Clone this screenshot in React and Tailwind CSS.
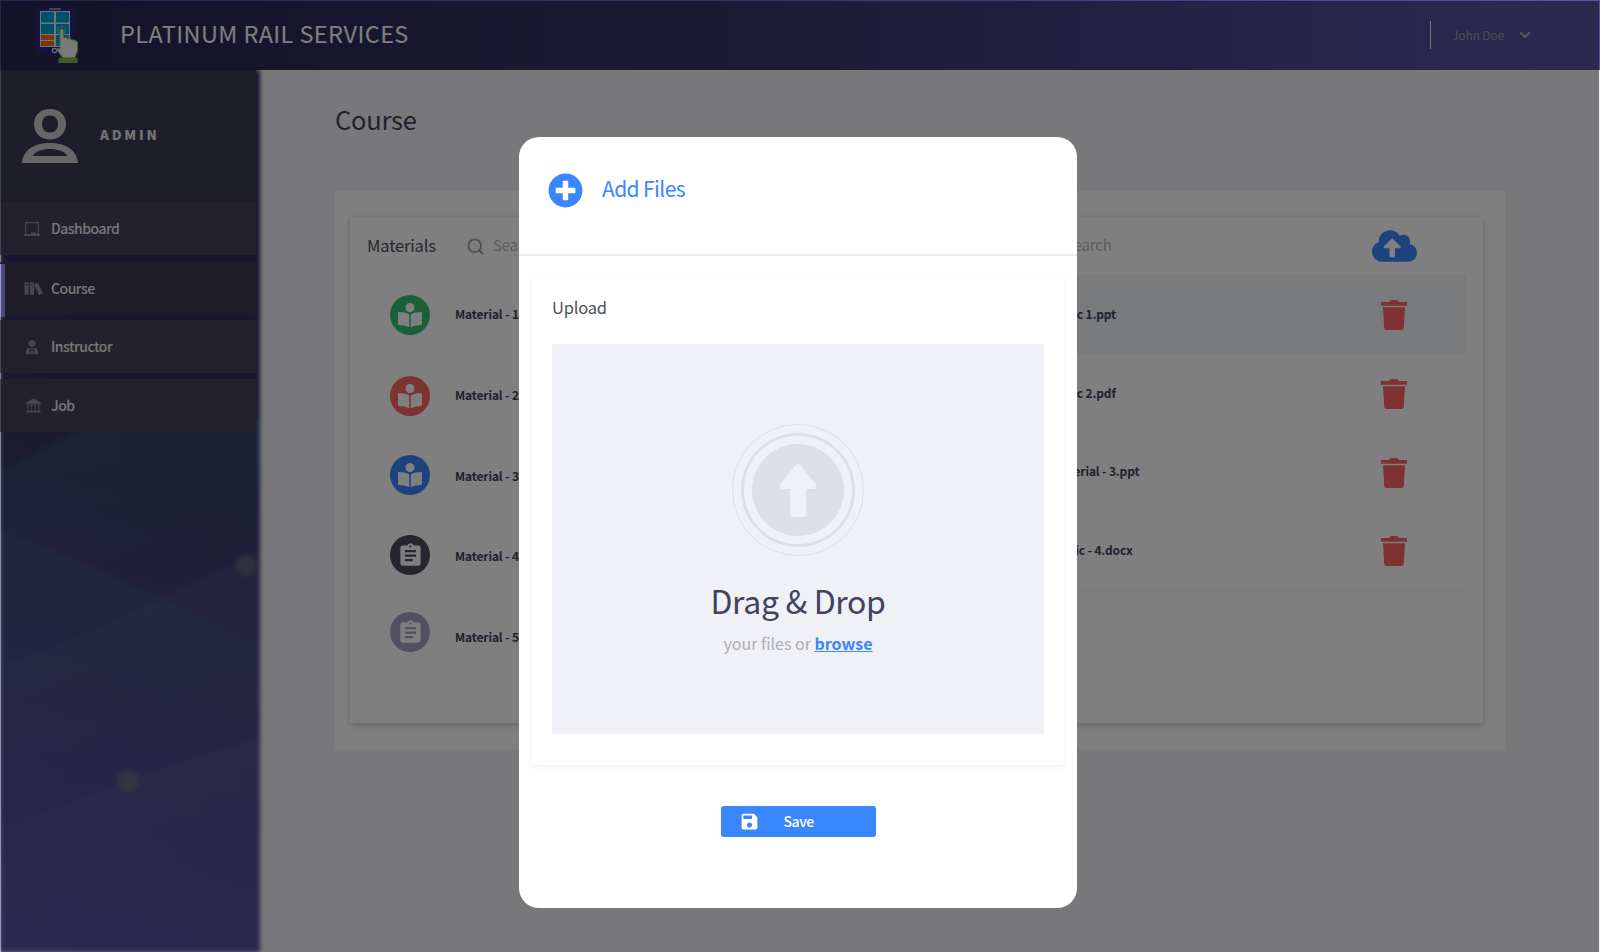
import React from "react";
import { FaBookReader, FaCloudUploadAlt, FaPlusCircle, FaUserTie } from "react-icons/fa";
import { ImBooks, ImLibrary } from "react-icons/im";
import { MdAssignment, MdSave } from "react-icons/md";
import { FiSearch } from "react-icons/fi";

function Logo() {
  return (
    <svg className="mb-[7px] h-[64px] w-[48px] shrink-0" viewBox="32 0 48 64">
      <rect x="36" y="7" width="38" height="47" rx="3" fill="#262480" />
      <rect x="49" y="8" width="12" height="2" rx="1" fill="#8a88b8" />
      <rect x="40" y="11" width="30" height="36" fill="#e8e8f0" />
      <rect x="41" y="12" width="13" height="10.500" fill="#00a4d6" />
      <rect x="56" y="12" width="13" height="10.500" fill="#00a4d6" />
      <rect x="41" y="24" width="13" height="10" fill="#00a4d6" />
      <rect x="56" y="24" width="13" height="10" fill="#00a4d6" />
      <rect x="41" y="35" width="13" height="5" fill="#f26a21" />
      <rect x="41" y="41" width="13" height="5" fill="#f26a21" />
      <rect x="56" y="35" width="13" height="11" fill="#00a4d6" />
      <circle cx="54.500" cy="50.500" r="2.200" fill="none" stroke="#e8e8f0" strokeWidth="1.200" />
      <circle cx="61.500" cy="30.500" r="4" fill="none" stroke="#5cc0c0" strokeWidth="1.200" />
      <path
        d="M60 30q1.500-2.500 3.500 0v8l3-.5 1 1.500 3-.5 1 1.500 3 0 3 2v9l-3 7H63l-6-8q-1-2.500 3-1z"
        fill="#f4f4f4"
        stroke="#8cc63f"
        strokeWidth="1"
      />
      <path d="M60 57.500h17.500V63h-19v-4z" fill="#7cb83a" />
    </svg>
  );
}

function AvatarIcon() {
  return (
    <svg className="h-[54px] w-[56px] shrink-0" viewBox="0 0 56 54" fill="#cdcdcd" fillRule="evenodd">
      <path d="M28 0c9.500 0 16 6 16 15s-6.500 15.500-16 15.500S12 24 12 15 18.500 0 28 0zm0 6.500c-5 0-8 3.200-8 8.500s3 8.500 8 8.500 8-3.200 8-8.500-3-8.500-8-8.500z" />
      <path d="M0 54C1 41 12 34 28 34s27 7 28 20zM10.500 47h35C42 42 36 40 28 40s-14 2-17.500 7z" />
    </svg>
  );
}

function BoardIcon() {
  return (
    <svg className="h-[14px] w-4" viewBox="0 0 16 14" fill="currentColor">
      <path d="M1 0h14v12h1v2H0v-2h1zM2.300 1.300V12H7v-1.500h5V12h1.700V1.300z" fillRule="evenodd" />
    </svg>
  );
}

function ChevronIcon() {
  return (
    <svg className="ml-[15px] h-2 w-3" viewBox="0 0 12 8" fill="none" stroke="#b0b0b0" strokeWidth="2">
      <path d="M1.200 1.200 6 6l4.800-4.800" />
    </svg>
  );
}

function TrashIcon({ className }) {
  return (
    <svg className={`h-[30px] w-[26px] text-[#ff6565] ${className}`} viewBox="0 0 26 30" fill="currentColor">
      <path d="M0 2h8q1-2 2.500-2h5Q17 0 18 2h8v3.700H0zM2 7.200h22l-1.200 20.600q-.2 2.200-2.400 2.200H5.600q-2.200 0-2.400-2.200z" />
    </svg>
  );
}

function DropIcon() {
  return (
    <svg className="size-[132px]" viewBox="-66 -66 132 132">
      <circle r="65.500" fill="none" stroke="#dcdfe6" strokeWidth="1" />
      <circle r="55.500" fill="none" stroke="#dcdfe6" strokeWidth="3" />
      <circle r="46" fill="#dcdfe6" />
      <path
        d="M-2.200-25q2.200-2 4.400 0L18-5.500q1.500 4-2 4.500H8v25q0 3-3 3H-5q-3 0-3-3V-1h-8q-3.500-.5-2-4.500z"
        fill="#f0f1f7"
      />
    </svg>
  );
}

function SidebarArt() {
  return (
    <div className="absolute inset-y-0 -right-px left-0 blur-[2px]">
      <svg className="h-full w-full" viewBox="0 0 259 882" preserveAspectRatio="none">
        <defs>
          <linearGradient id="base" gradientUnits="userSpaceOnUse" x1="259" y1="120" x2="60" y2="882">
            <stop offset="0" stopColor="#2e2959" />
            <stop offset=".35" stopColor="#37335f" />
            <stop offset=".5" stopColor="#413d74" />
            <stop offset=".75" stopColor="#4d498c" />
            <stop offset="1" stopColor="#56529c" />
          </linearGradient>
          <linearGradient id="teal" x1="0" y1="0" x2="0" y2="1">
            <stop offset="0" stopColor="#3c6b8c" stopOpacity=".36" />
            <stop offset=".75" stopColor="#3c6b8c" stopOpacity="0" />
          </linearGradient>
          <linearGradient id="mist" x1="0" y1="0" x2="0" y2="1">
            <stop offset="0" stopColor="#77739a" stopOpacity=".18" />
            <stop offset="1" stopColor="#77739a" stopOpacity="0" />
          </linearGradient>
        </defs>
        <rect width="259" height="882" fill="url(#base)" />
        <path d="M0 404Q60 366 110 350H259V571L150 532 0 461z" fill="url(#teal)" />
        <path d="M0 461Q60 482 120 510T259 571V760H0z" fill="url(#teal)" />
        <path d="M0 595Q70 574 150 533T259 490V760H0z" fill="url(#mist)" />
        <path d="M0 762Q60 735 130 710T259 668V882H0z" fill="url(#mist)" />
        <circle cx="245" cy="495" r="10.500" fill="#62607e" />
        <circle cx="128" cy="711" r="10.500" fill="#6b6888" />
      </svg>
    </div>
  );
}

const menu = [
  { label: "Dashboard", icon: <BoardIcon />, gap: "", bg: "bg-[#44425a]" },
  { label: "Course", icon: <ImBooks className="h-[17px] w-5" />, gap: "mt-[7px]", bg: "bg-[#3a384f]", active: true },
  { label: "Instructor", icon: <FaUserTie className="ml-px size-[14px]" />, gap: "mt-[5px]", bg: "bg-[#44425a]" },
  { label: "Job", icon: <ImLibrary className="ml-[2px] size-[15px]" />, gap: "mt-[6px]", bg: "bg-[#44425a]" },
];

function Sidebar() {
  return (
    <aside className="relative w-[259px] shrink-0">
      <SidebarArt />
      <div className="relative flex w-[256px] flex-col">
        <div className="flex h-[132px] items-center bg-[#3c3a55] pl-[22px]">
          <AvatarIcon />
          <span className="mb-[2px] ml-[22px] text-[13.500px] leading-none font-black tracking-[2.800px] text-[#e6e6e6]">ADMIN</span>
        </div>
        {menu.map((m) => (
          <div key={m.label} className={`relative flex h-[53px] items-center pl-6 ${m.gap} ${m.bg}`}>
            {m.active && <span className="absolute top-[2px] left-0 h-[53px] w-[5px] bg-[#9c98ee]" />}
            <span className="flex w-[27px] items-center text-[#8d8ba3]">{m.icon}</span>
            <span className="mb-[2px] text-[14px] leading-none font-medium tracking-[-0.5px] text-[#efefef]">{m.label}</span>
          </div>
        ))}
      </div>
    </aside>
  );
}

const materials = [
  { name: "Material - 1", bg: "bg-[#38c172]", book: true, gap: "" },
  { name: "Material - 2", bg: "bg-[#ff6565]", book: true, gap: "mt-[41px]" },
  { name: "Material - 3", bg: "bg-[#3a86ff]", book: true, gap: "mt-[39px]" },
  { name: "Material - 4", bg: "bg-[#4d4f5c]", gap: "mt-10" },
  { name: "Material - 5", bg: "bg-[#a3a1bd]", gap: "mt-[37px]" },
];

const topics = [
  { name: "Topic 1.ppt", row: "h-[79px] bg-[#f2f5f9] pl-[142px]", trash: "mt-px" },
  { name: "Topic 2.pdf", row: "h-[79px] pl-[142px]", trash: "" },
  { name: "Material - 3.ppt", row: "h-[78px] border-b border-[#fafafc] pl-[142px]", trash: "mt-[3px]" },
  { name: "Topic - 4.docx", row: "h-[80px] border-b border-[#f4f4f8] pl-[144px]", trash: "-ml-[2px] mt-px" },
];

function SearchBox({ className }) {
  return (
    <div className={`flex items-center text-[#bcbac8] ${className}`}>
      <FiSearch className="size-[19px] stroke-[2.5] text-[#a5a4b4]" />
      <span className="mb-[3px] ml-2 text-[15px] leading-none tracking-[-0.2px]">Search</span>
    </div>
  );
}

function Content() {
  return (
    <main className="flex-1 bg-[#f0f0f5] pt-[121px] pl-[76px]">
      <h1 className="-mt-[89px] h-[89px] text-[25.500px] leading-[34px] tracking-[-0.25px] text-[#43425d]">Course</h1>
      <section className="h-[558px] w-[1170px] bg-white pt-[26px] pl-[15px]">
        <div className="flex h-[506px] w-[1133px] bg-white shadow-[0_2px_6px_rgba(0,0,0,0.22)]">
          <div className="w-[560px]">
            <div className="flex h-[58px] items-center pl-[17px]">
              <h2 className="mb-[2px] w-[99px] text-[16.500px] leading-none tracking-[-0.15px] text-[#4d4f5c]">Materials</h2>
              <SearchBox className="" />
            </div>
            <div className="flex pt-5 pl-10">
              <div className="flex w-[65px] flex-col">
                {materials.map(({ name, bg, book, gap }) => (
                  <span key={name} className={`flex size-10 items-center justify-center rounded-full text-white ${bg} ${gap}`}>
                    {book ? <FaBookReader className="size-6" /> : <MdAssignment className="size-[27px]" />}
                  </span>
                ))}
              </div>
              <ul className="-mt-[21px] text-[12px] leading-[80.750px] font-bold tracking-[-0.15px] text-[#43425d]">
                {materials.map(({ name }) => (
                  <li key={name}>{name}</li>
                ))}
              </ul>
            </div>
          </div>
          <div className="w-[556px]">
            <div className="flex h-[58px] items-center">
              <SearchBox className="ml-[128px] w-[334px]" />
              <FaCloudUploadAlt className="h-9 w-[45px] text-[#3a86ff]" />
            </div>
            {topics.map((t) => (
              <div key={t.name} className={`flex items-center ${t.row}`}>
                <span className="mb-[2px] w-[329px] text-[12px] leading-none font-bold tracking-[-0.15px] text-[#43425d]">{t.name}</span>
                <TrashIcon className={t.trash} />
              </div>
            ))}
          </div>
        </div>
      </section>
    </main>
  );
}

function Modal() {
  return (
    <div role="dialog" className="absolute top-[137px] left-[519px] flex h-[771px] w-[558px] flex-col items-center rounded-[20px] bg-white">
      <div className="flex h-[119px] w-full items-center border-b-2 border-[#ebebed] pb-[11px] pl-[29px]">
        <FaPlusCircle className="size-[35px] text-[#3a86ff]" />
        <h2 className="mb-[3px] ml-[19px] text-[21px] leading-none tracking-[-0.6px] text-[#3a86ff]">Add Files</h2>
      </div>
      <section className="mt-[19px] flex h-[490px] w-[532px] flex-col bg-white px-5 shadow-[0_2px_6px_rgba(0,0,0,0.05)]">
        <h3 className="flex h-[69px] items-center pb-1 text-[16.500px] leading-none tracking-[-0.2px] text-[#4d4f5c]">Upload</h3>
        <div className="flex h-[390px] flex-col items-center bg-[#f0f1f7] pt-20">
          <DropIcon />
          <p className="mt-6 text-[32px] leading-[40px] tracking-[-0.35px] text-[#43425d]">Drag &amp; Drop</p>
          <p className="mt-[11px] text-[16px] leading-[24px] text-[#aeaeae]">
            your files or <a className="font-bold text-[#3a86ff] underline">browse</a>
          </p>
        </div>
      </section>
      <button className="mt-[41px] flex h-[31px] w-[155px] items-center rounded-[3px] bg-[#3a86ff] text-white">
        <MdSave className="ml-[18px] size-[21px]" />
        <span className="mb-px ml-6 text-[14px] leading-none font-medium tracking-[-0.45px]">Save</span>
      </button>
    </div>
  );
}

export default function App() {
  return (
    <div className="relative flex h-[952px] w-[1600px] flex-col overflow-hidden bg-[#f0f0f5] font-['Noto_Sans_CJK_JP','Noto_Sans_CJK_SC',sans-serif]">
      <div className="flex flex-1">
        <Sidebar />
        <Content />
      </div>
      <header className="relative order-first flex h-[70px] shrink-0 items-center bg-linear-to-r/srgb from-[#292550] from-0% via-[#37346a] via-45% to-[#5a54a4] pl-8">
        <Logo />
        <span className="mb-[2px] ml-10 text-[23.500px] leading-none tracking-[0.4px] text-white">PLATINUM RAIL SERVICES</span>
        <div className="ml-auto flex items-center pr-[69px]">
          <span className="h-7 w-px bg-[#f0f0f5]" />
          <span className="ml-[21px] text-[12px] leading-none tracking-[-0.15px] text-[#999]">John Doe</span>
          <ChevronIcon />
        </div>
      </header>
      <div className="absolute top-px right-px bottom-0 left-px bg-black/50" />
      <Modal />
    </div>
  );
}
